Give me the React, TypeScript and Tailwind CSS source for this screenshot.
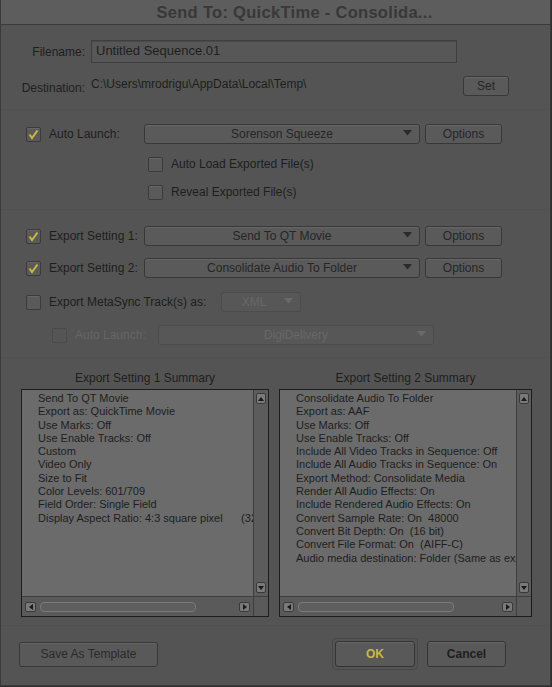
import type { ReactNode } from 'react';

const font = { fontFamily: '"Liberation Sans", Arial, sans-serif' };

function Check({ on, disabled }: { on?: boolean; disabled?: boolean }) {
  return (
    <div
      className={`w-[15px] h-[15px] shrink-0 rounded-[2px] border flex items-center justify-center ${
        disabled ? 'border-[#4a4a4a] bg-[#555]' : 'border-[#3a3a3a] bg-[#5a5a5a] shadow-[inset_0_1px_0_#666]'
      }`}
    >
      {on && (
        <svg width="11" height="11" viewBox="0 0 11 11">
          <path d="M1.5 5.5 L4 9 L9.5 1.5" fill="none" stroke="#cdb640" strokeWidth="2" />
        </svg>
      )}
    </div>
  );
}

function Arrow({ color = '#2a2a2a' }: { color?: string }) {
  return (
    <svg width="9" height="6" viewBox="0 0 9 6" className="absolute right-[7px] top-[5px]">
      <path d="M0 0 H9 L4.5 5.5 Z" fill={color} />
    </svg>
  );
}

function Dropdown({ label, w, disabled }: { label: string; w: string; disabled?: boolean }) {
  return (
    <div
      className={`relative h-[20px] ${w} rounded-[3px] border flex items-center justify-center text-[12px] ${
        disabled
          ? 'border-[#4c4c4c] bg-[#575757] text-[#676767]'
          : 'border-[#383838] bg-[#5a5a5a] text-[#262626] shadow-[inset_0_1px_0_#666]'
      }`}
    >
      {label}
      <Arrow color={disabled ? '#6a6a6a' : '#2a2a2a'} />
    </div>
  );
}

function Btn({ children, w, cls = '' }: { children: ReactNode; w: string; cls?: string }) {
  return (
    <div
      className={`h-[20px] ${w} rounded-[3px] border border-[#383838] bg-[#5a5a5a] shadow-[inset_0_1px_0_#676767] flex items-center justify-center text-[12px] text-[#262626] ${cls}`}
    >
      {children}
    </div>
  );
}

function Summary({ title, lines }: { title: string; lines: string[] }) {
  return (
    <div className="flex flex-col">
      <div className="h-[22px] flex items-end justify-center pb-[2px] text-[12px] text-[#1e1e1e]">{title}</div>
      <div className="h-[228px] border border-[#1c1c1c] flex flex-col bg-[#5a5a5a]">
        <div className="flex flex-1 min-h-0">
          <div className="flex-1 bg-[#6b6b6b] pl-[16px] pt-[2px] overflow-hidden whitespace-pre text-[11px] leading-[13.3px] text-[#1e1e1e]">
            {lines.map((l, i) => (
              <div key={i}>{l}</div>
            ))}
          </div>
          <div className="w-[15px] border-l border-[#3e3e3e] bg-[#5c5c5c] flex flex-col items-center justify-between py-[3px]">
            <div className="w-[10px] h-[11px] rounded-[2px] bg-[#7a7a7a] border border-[#3a3a3a] flex items-center justify-center">
              <svg width="6" height="4" viewBox="0 0 6 4"><path d="M0 4 L3 0 L6 4 Z" fill="#1a1a1a" /></svg>
            </div>
            <div className="w-[10px] h-[11px] rounded-[2px] bg-[#7a7a7a] border border-[#3a3a3a] flex items-center justify-center">
              <svg width="6" height="4" viewBox="0 0 6 4"><path d="M0 0 L6 0 L3 4 Z" fill="#1a1a1a" /></svg>
            </div>
          </div>
        </div>
        <div className="h-[20px] border-t border-[#3e3e3e] flex">
          <div className="flex-1 flex items-center px-[3px] gap-[4px]">
            <div className="w-[11px] h-[10px] rounded-[2px] bg-[#7a7a7a] border border-[#3a3a3a] flex items-center justify-center">
              <svg width="4" height="6" viewBox="0 0 4 6"><path d="M4 0 L0 3 L4 6 Z" fill="#1a1a1a" /></svg>
            </div>
            <div className="w-[156px] h-[10px] rounded-[4px] border border-[#7a7a7a] bg-[#5e5e5e]" />
            <div className="flex-1" />
            <div className="w-[11px] h-[10px] rounded-[2px] bg-[#7a7a7a] border border-[#3a3a3a] flex items-center justify-center">
              <svg width="4" height="6" viewBox="0 0 4 6"><path d="M0 0 L4 3 L0 6 Z" fill="#1a1a1a" /></svg>
            </div>
          </div>
          <div className="w-[15px] border-l border-[#3e3e3e]" />
        </div>
      </div>
    </div>
  );
}

const summary1 = [
  'Send To QT Movie',
  'Export as: QuickTime Movie',
  'Use Marks: Off',
  'Use Enable Tracks: Off',
  'Custom',
  'Video Only',
  'Size to Fit',
  'Color Levels: 601/709',
  'Field Order: Single Field',
  'Display Aspect Ratio: 4:3 square pixel      (320 x 240)',
];

const summary2 = [
  'Consolidate Audio To Folder',
  'Export as: AAF',
  'Use Marks: Off',
  'Use Enable Tracks: Off',
  'Include All Video Tracks in Sequence: Off',
  'Include All Audio Tracks in Sequence: On',
  'Export Method: Consolidate Media',
  'Render All Audio Effects: On',
  'Include Rendered Audio Effects: On',
  'Convert Sample Rate: On  48000',
  'Convert Bit Depth: On  (16 bit)',
  'Convert File Format: On  (AIFF-C)',
  'Audio media destination: Folder (Same as exported file)',
];

export default function App() {
  return (
    <div style={font} className="w-[552px] h-[687px] bg-[#2e2e2e] p-0">
      <div className="w-[551px] h-[686px] bg-[#545454] border-l border-r border-b border-[#3a3a3a] flex flex-col">
        {/* title */}
        <div className="h-[25px] bg-[#5d5d5d] border-b border-[#3b3b3b] flex items-center justify-center pl-[38px]">
          <span className="text-[16.5px] font-bold text-[#383838] tracking-[0.3px]">Send To: QuickTime - Consolida...</span>
        </div>

        {/* file */}
        <div className="flex items-center mt-[15px] h-[23px]">
          <div className="w-[84px] text-right text-[12px] text-[#1e1e1e]">Filename:</div>
          <div className="ml-[6px] w-[366px] h-[23px] border border-[#3e3e3e] bg-[#575757] shadow-[inset_0_1px_0_#4a4a4a] px-[4px] text-[13px] text-[#1e1e1e] leading-[20px]">
            Untitled Sequence.01
          </div>
        </div>
        <div className="flex items-center mt-[13px] h-[20px]">
          <div className="w-[84px] text-right text-[12px] text-[#1e1e1e] pt-[4px]">Destination:</div>
          <div className="ml-[6px] text-[12px] text-[#1e1e1e] -mt-[4px]">C:\Users\mrodrigu\AppData\Local\Temp\</div>
          <div className="flex-1" />
          <Btn w="w-[46px]" cls="mr-[41px]">Set</Btn>
        </div>

        <div className="mt-[13px] border-t border-[#515151]" />

        {/* auto launch */}
        <div className="flex items-center mt-[14px] h-[20px] pl-[25px]">
          <Check on />
          <div className="ml-[8px] w-[95px] text-[12px] text-[#1e1e1e]">Auto Launch:</div>
          <Dropdown label="Sorenson Squeeze" w="w-[276px]" />
          <Btn w="w-[77px]" cls="ml-[5px]">Options</Btn>
        </div>
        <div className="flex items-center mt-[12px] h-[16px] pl-[147px]">
          <Check />
          <div className="ml-[8px] text-[12px] text-[#1e1e1e]">Auto Load Exported File(s)</div>
        </div>
        <div className="flex items-center mt-[12px] h-[16px] pl-[147px]">
          <Check />
          <div className="ml-[8px] text-[12px] text-[#1e1e1e]">Reveal Exported File(s)</div>
        </div>

        <div className="mt-[9px] border-t border-[#515151]" />

        {/* export settings */}
        <div className="flex items-center mt-[16px] h-[20px] pl-[25px]">
          <Check on />
          <div className="ml-[8px] w-[95px] text-[12px] text-[#1e1e1e]">Export Setting 1:</div>
          <Dropdown label="Send To QT Movie" w="w-[276px]" />
          <Btn w="w-[77px]" cls="ml-[5px]">Options</Btn>
        </div>
        <div className="flex items-center mt-[12px] h-[20px] pl-[25px]">
          <Check on />
          <div className="ml-[8px] w-[95px] text-[12px] text-[#1e1e1e]">Export Setting 2:</div>
          <Dropdown label="Consolidate Audio To Folder" w="w-[276px]" />
          <Btn w="w-[77px]" cls="ml-[5px]">Options</Btn>
        </div>
        <div className="flex items-center mt-[14px] h-[20px] pl-[25px]">
          <Check />
          <div className="ml-[8px] w-[172px] text-[12px] text-[#1e1e1e]">Export MetaSync Track(s) as:</div>
          <Dropdown label="XML" w="w-[80px] pr-[14px]" disabled />
        </div>
        <div className="flex items-center mt-[13px] h-[20px] pl-[51px]">
          <Check disabled />
          <div className="ml-[8px] w-[83px] text-[12px] text-[#656565]">Auto Launch:</div>
          <Dropdown label="DigiDelivery" w="w-[276px]" disabled />
        </div>

        <div className="mt-[12px] border-t border-[#515151]" />

        {/* summaries */}
        <div className="flex mt-[9px] pl-[20px] gap-[10px]">
          <div className="w-[248px]">
            <Summary title="Export Setting 1 Summary" lines={summary1} />
          </div>
          <div className="w-[253px]">
            <Summary title="Export Setting 2 Summary" lines={summary2} />
          </div>
        </div>

        <div className="mt-[8px] border-t border-[#515151]" />

        {/* buttons */}
        <div className="flex items-center mt-[12px] pl-[18px] h-[32px]">
          <div className="w-[139px] h-[25px] rounded-[3px] border border-[#383838] bg-[#595959] shadow-[inset_0_1px_0_#666] flex items-center justify-center text-[12px] text-[#2a2a2a]">
            Save As Template
          </div>
          <div className="flex-1" />
          <div className="w-[86px] h-[32px] rounded-[4px] border border-[#474747] flex items-center justify-center">
            <div className="w-[80px] h-[26px] rounded-[3px] border border-[#343434] bg-[#595959] shadow-[inset_0_1px_0_#666] flex items-center justify-center text-[12px] font-bold text-[#c9b948]">
              OK
            </div>
          </div>
          <div className="ml-[9px] mr-[44px] w-[79px] h-[26px] rounded-[3px] border border-[#343434] bg-[#595959] shadow-[inset_0_1px_0_#666] flex items-center justify-center text-[12px] font-bold text-[#1e1e1e]">
            Cancel
          </div>
        </div>
      </div>
    </div>
  );
}
